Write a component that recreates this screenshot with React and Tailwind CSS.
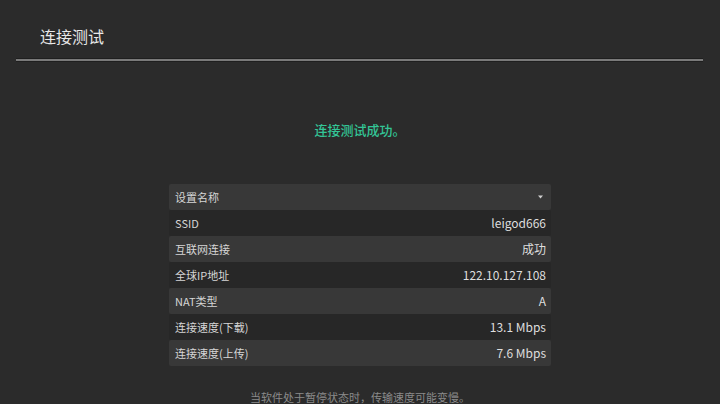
import { useState } from 'react';

const rows = [
  { label: '设置名称', value: null, caret: true },
  { label: 'SSID', value: 'leigod666' },
  { label: '互联网连接', value: '成功' },
  { label: '全球IP地址', value: '122.10.127.108' },
  { label: 'NAT类型', value: 'A' },
  { label: '连接速度(下载)', value: '13.1 Mbps' },
  { label: '连接速度(上传)', value: '7.6 Mbps' },
];

export default function App() {
  const [items] = useState(rows);

  return (
    <div
      className="w-[720px] h-[404px] overflow-hidden bg-[#2b2b2b] text-[#dcdcdc]"
      style={{ fontFamily: '"Noto Sans CJK SC", "Noto Sans", sans-serif' }}
    >
      <header className="pt-[24px]">
        <h1 className="pl-[40px] text-[16px] leading-[24px] text-[#e8e8e8]">连接测试</h1>
        <div className="mt-[10px] ml-[16px] mr-[17px] h-[4px] bg-[#7a7a7a] border-y border-[#1f1f1f]" />
      </header>

      <p className="mt-[58px] text-center text-[13px] leading-[20px] font-medium text-[#33c596]">连接测试成功。</p>

      <div className="mt-[44px] mx-auto w-[382px]">
        {items.map((row, i) => (
          <div
            key={row.label}
            className={
              'h-[26px] flex items-center justify-between pl-[6px] pr-[5px] rounded-[2px] ' +
              (i % 2 === 0 ? 'bg-[#383838]' : 'bg-[#272727]')
            }
          >
            <span className="text-[11px] text-[#d6d6d6]">{row.label}</span>
            {row.caret ? (
              <svg width="5" height="4" viewBox="0 0 5 4" className="mr-[3px]">
                <path d="M0 0.5h5L2.5 3.5z" fill="#cfcfcf" />
              </svg>
            ) : (
              <span className="text-[12px] text-[#dedede]">{row.value}</span>
            )}
          </div>
        ))}
      </div>

      <p className="mt-[23px] text-center text-[11px] leading-[16px] text-[#8a8a8a]">
        当软件处于暂停状态时，传输速度可能变慢。
      </p>
    </div>
  );
}
